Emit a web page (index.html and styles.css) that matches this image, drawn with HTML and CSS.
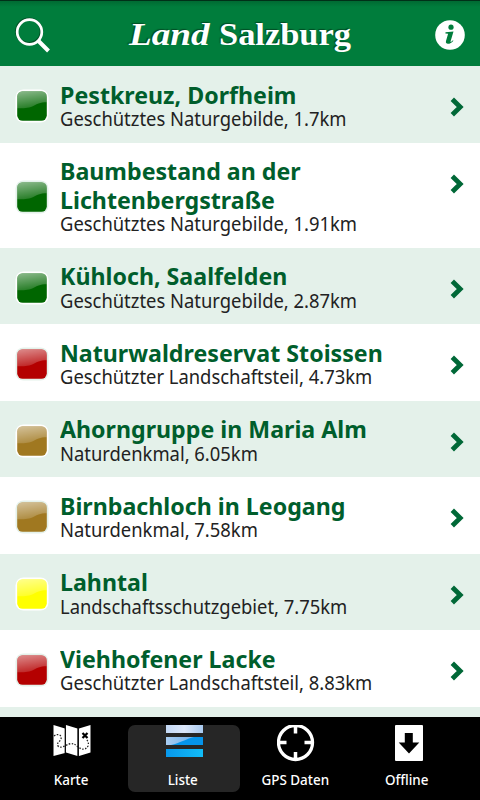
FILE: index.html
```
<!DOCTYPE html>
<html lang="de">
<head>
    <meta charset="UTF-8">
    <meta name="viewport" content="width=device-width, initial-scale=1.0">
    <title>Land Salzburg</title>
    <link rel="stylesheet" href="styles.css">
</head>
<body>
    <svg width="0" height="0" class="defs">
        <defs>
            <linearGradient id="shine" x1="0" y1="0" x2="0.25" y2="1">
                <stop offset="0" stop-color="#fff" stop-opacity="0.55"/>
                <stop offset="1" stop-color="#fff" stop-opacity="0.16"/>
            </linearGradient>
            <symbol id="marker" viewBox="0 0 34 34">
                <rect class="frame" x="0.500" y="0.500" width="33" height="33" rx="8"/>
                <rect x="2.200" y="2.200" width="29.600" height="29.600" rx="5.500" fill="currentColor"/>
                <path d="M7.700 2.200h18.600a5.500 5.500 0 0 1 5.500 5.500v5.500c-7 0-10 2-14 4-5 2-9 2-15.600 2V7.700A5.500 5.500 0 0 1 7.700 2.200z" fill="url(#shine)"/>
            </symbol>
            <symbol id="arrow" viewBox="0 0 14 20">
                <path d="M2.300 2.200L10.200 10L2.300 17.800" fill="none" stroke="#006837" stroke-width="4.800"/>
            </symbol>
        </defs>
    </svg>

    <header class="header">
        <svg class="search" viewBox="0 0 36 36" width="36" height="36">
            <circle cx="13.900" cy="14.200" r="12.300" fill="none" stroke="#003d1c" stroke-opacity="0.7" stroke-width="3"/>
            <circle cx="14.500" cy="15" r="12.300" fill="none" stroke="#fff" stroke-width="2.700"/>
            <path d="M23.500 24L33.500 34" stroke="#fff" stroke-width="4"/>
        </svg>
        <h1 class="logo"><i>Land</i><span>Salzburg</span></h1>
        <svg class="info" viewBox="0 0 30 30" width="30" height="30">
            <circle cx="15" cy="15" r="14.800" fill="#fff"/>
            <circle cx="16" cy="7.200" r="2.600" fill="#007d3c"/>
            <path d="M10.500 12.300l8-.8-2.900 9.800c-.2.900.5 1 2.300-1.100l.5.500c-2.400 3.500-8.600 4.600-7.400.4l2.100-7.400-2.700-.3z" fill="#007d3c"/>
        </svg>
    </header>

    <main class="list">
        <div class="item">
            <svg class="marker green"><use href="#marker"/></svg>
            <div class="text">
                <div class="title">Pestkreuz, Dorfheim</div>
                <div class="sub">Geschütztes Naturgebilde, 1.7km</div>
            </div>
            <svg class="arrow"><use href="#arrow"/></svg>
        </div>
        <div class="item">
            <svg class="marker green"><use href="#marker"/></svg>
            <div class="text">
                <div class="title">Baumbestand an der<br>Lichtenbergstraße</div>
                <div class="sub">Geschütztes Naturgebilde, 1.91km</div>
            </div>
            <svg class="arrow"><use href="#arrow"/></svg>
        </div>
        <div class="item">
            <svg class="marker green"><use href="#marker"/></svg>
            <div class="text">
                <div class="title">Kühloch, Saalfelden</div>
                <div class="sub">Geschütztes Naturgebilde, 2.87km</div>
            </div>
            <svg class="arrow"><use href="#arrow"/></svg>
        </div>
        <div class="item">
            <svg class="marker red"><use href="#marker"/></svg>
            <div class="text">
                <div class="title">Naturwaldreservat Stoissen</div>
                <div class="sub">Geschützter Landschaftsteil, 4.73km</div>
            </div>
            <svg class="arrow"><use href="#arrow"/></svg>
        </div>
        <div class="item">
            <svg class="marker brown"><use href="#marker"/></svg>
            <div class="text">
                <div class="title">Ahorngruppe in Maria Alm</div>
                <div class="sub">Naturdenkmal, 6.05km</div>
            </div>
            <svg class="arrow"><use href="#arrow"/></svg>
        </div>
        <div class="item">
            <svg class="marker brown"><use href="#marker"/></svg>
            <div class="text">
                <div class="title">Birnbachloch in Leogang</div>
                <div class="sub">Naturdenkmal, 7.58km</div>
            </div>
            <svg class="arrow"><use href="#arrow"/></svg>
        </div>
        <div class="item">
            <svg class="marker yellow"><use href="#marker"/></svg>
            <div class="text">
                <div class="title">Lahntal</div>
                <div class="sub">Landschaftsschutzgebiet, 7.75km</div>
            </div>
            <svg class="arrow"><use href="#arrow"/></svg>
        </div>
        <div class="item">
            <svg class="marker red"><use href="#marker"/></svg>
            <div class="text">
                <div class="title">Viehhofener Lacke</div>
                <div class="sub">Geschützter Landschaftsteil, 8.83km</div>
            </div>
            <svg class="arrow"><use href="#arrow"/></svg>
        </div>
        <div class="item"></div>
    </main>

    <nav class="tabs">
        <div class="tab">
            <svg viewBox="0 0 38 37" width="38" height="37">
                <path d="M0.500 0L12 3.500V28L0.500 31zM13 0L24.500 3.500V31L13 27.500zM26 3.500L37.500 0V27.500L26 31z" fill="#fff"/>
                <path d="M12.300 0v28M25.300 3v28" stroke="#111" stroke-width="1.300"/>
                <path d="M1 11c4-3 8-1 7 3-1 3-5 4-3 7 3 3 8-1 11-2 4-1 6 0 9 3 4 3 8 3 10-1 1-3 0-5-2-7" fill="none" stroke="#222" stroke-width="1.300" stroke-dasharray="1.500 1.500"/>
                <path d="M29.500 8l5 5M34.500 8l-5 5" stroke="#000" stroke-width="2.200"/>
            </svg>
            <span>Karte</span>
        </div>
        <div class="tab active">
            <svg viewBox="0 0 37 37" width="37" height="37">
                <defs>
                    <linearGradient id="bar1"><stop offset="0" stop-color="#c3d8f5"/><stop offset="0.500" stop-color="#dce7fa"/><stop offset="1" stop-color="#a8c9ef"/></linearGradient>
                    <linearGradient id="bar2"><stop offset="0" stop-color="#a9ccf1"/><stop offset="1" stop-color="#5fa8e8"/></linearGradient>
                    <linearGradient id="bar3"><stop offset="0" stop-color="#0898ec"/><stop offset="1" stop-color="#12bdf8"/></linearGradient>
                </defs>
                <rect width="37" height="8" fill="url(#bar1)"/>
                <rect y="12" width="37" height="8" fill="url(#bar2)"/>
                <path d="M5 20C14 18 20 14 28 12h9v8z" fill="#0594ea"/>
                <rect y="24" width="37" height="8" fill="url(#bar3)"/>
            </svg>
            <span>Liste</span>
        </div>
        <div class="tab">
            <svg viewBox="0 0 38 37" width="38" height="37">
                <circle cx="18.500" cy="17.500" r="17" fill="none" stroke="#fff" stroke-width="3.300"/>
                <path d="M18.500 1v7.500M18.500 27v8M1.500 17.500h8M27.500 17.500h8" stroke="#fff" stroke-width="3.500"/>
            </svg>
            <span>GPS Daten</span>
        </div>
        <div class="tab">
            <svg viewBox="0 0 30 37" width="30" height="37">
                <rect x="2" width="28" height="36" rx="1" fill="#fff"/>
                <path d="M11.800 8h8v9.500h6.500L16 28.500L5.700 17.500h6.100z" fill="#000"/>
            </svg>
            <span>Offline</span>
        </div>
    </nav>
</body>
</html>
```
FILE: styles.css
```
* {
    box-sizing: border-box;
}
body {
    margin: 0;
    width: 480px;
    height: 800px;
    overflow: hidden;
    display: flex;
    flex-direction: column;
    background-color: #fff;
    font-family: "Noto Sans", "Open Sans", sans-serif;
}
.defs {
    position: absolute;
}
.header {
    flex: none;
    height: 66px;
    padding: 3px 15px 0;
    display: flex;
    align-items: center;
    background: linear-gradient(#003018 0, #003018 1px, #006a32 1px, #007d3c 7px);
}
.logo {
    flex: 1;
    display: flex;
    margin: 0 0 0 78px;
    font-family: "Liberation Serif", serif;
    font-size: 31px;
    line-height: 40px;
    color: #fff;
    text-shadow: -1px -1px 1px #004d25;
}
.logo i {
    width: 90px;
    transform: scaleX(1.2);
    transform-origin: left;
}
.logo span {
    transform: scaleX(1.11);
    transform-origin: left;
}
.list {
    flex: 1;
    min-height: 0;
    overflow: hidden;
}
.item {
    --frame: #e4f1ea;
    display: flex;
    align-items: center;
    min-height: 76.5px;
    padding: 14.5px 16px 11.5px 14.5px;
}
.item:nth-child(odd) {
    --frame: #fff;
    background-color: #e4f1ea;
}
.marker {
    flex: none;
    width: 34px;
    height: 34px;
    margin: 1px 11.5px 0 0;
}
.frame {
    fill: var(--frame);
}
.green {
    color: #006600;
}
.red {
    color: #b40000;
}
.brown {
    color: #a07820;
}
.yellow {
    color: #ffff00;
}
.text {
    flex: 1;
    white-space: nowrap;
}
.title {
    font-size: 24px;
    font-weight: bold;
    line-height: 28.5px;
    color: #005e2c;
    transform: scaleX(0.966);
    transform-origin: left;
}
.sub {
    font-size: 19.5px;
    line-height: 24px;
    margin-top: -2px;
    color: #222;
    transform: scaleX(0.943);
    transform-origin: left;
}
.arrow {
    flex: none;
    align-self: flex-start;
    width: 14px;
    height: 20px;
    margin-top: 16.5px;
}
.tabs {
    flex: none;
    height: 83px;
    padding: 8px 16px;
    display: flex;
    background-color: #000;
}
.tab {
    width: 112px;
    height: 67px;
    display: flex;
    flex-direction: column;
    align-items: center;
    border-radius: 7px;
    font-size: 14px;
    font-weight: 500;
    color: #fff;
}
.tab span {
    line-height: 20px;
    margin: 8px 2px 0 0;
    transform: scaleX(0.96);
}
.active {
    background-color: #262626;
}
```
